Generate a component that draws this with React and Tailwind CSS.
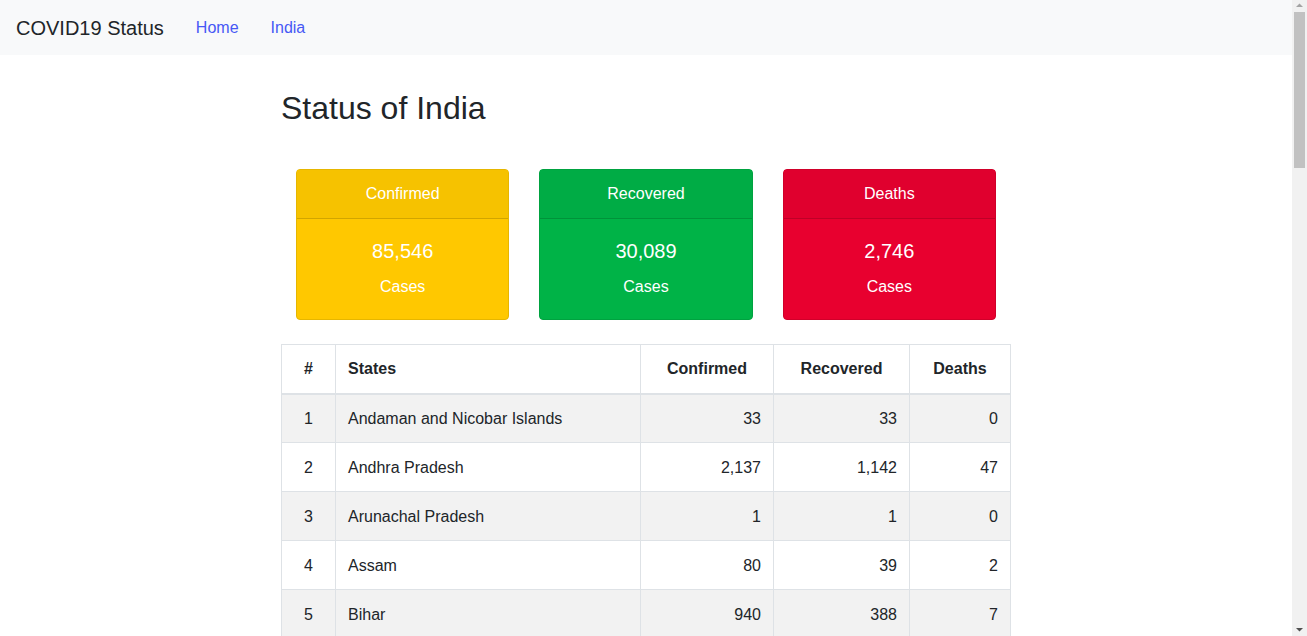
import React from 'react';

const font = { fontFamily: '"Liberation Sans", Arial, sans-serif' };

const states = [
  ['Andaman and Nicobar Islands', 33, 33, 0],
  ['Andhra Pradesh', 2137, 1142, 47],
  ['Arunachal Pradesh', 1, 1, 0],
  ['Assam', 80, 39, 2],
  ['Bihar', 940, 388, 7],
  ['Chandigarh', 191, 43, 3],
  ['Chhattisgarh', 66, 56, 0],
  ['Dadra and Nagar Haveli and Daman and Diu', 1, 0, 0],
  ['Delhi', 8470, 3045, 115],
  ['Goa', 14, 7, 0],
  ['Gujarat', 9931, 4035, 606],
  ['Haryana', 818, 500, 11],
  ['Himachal Pradesh', 74, 41, 3],
  ['Jammu and Kashmir', 983, 466, 11],
  ['Jharkhand', 203, 87, 3],
  ['Karnataka', 987, 460, 35],
  ['Kerala', 560, 490, 4],
  ['Ladakh', 43, 21, 0],
  ['Lakshadweep', 0, 0, 0],
  ['Madhya Pradesh', 4426, 2171, 237],
  ['Maharashtra', 29100, 6564, 1068],
  ['Manipur', 3, 2, 0],
  ['Meghalaya', 13, 11, 1],
  ['Mizoram', 1, 1, 0],
  ['Nagaland', 0, 0, 0],
  ['Odisha', 611, 143, 3],
  ['Puducherry', 13, 9, 1],
  ['Punjab', 1935, 201, 32],
  ['Rajasthan', 4727, 2677, 125],
  ['Sikkim', 0, 0, 0],
  ['Tamil Nadu', 10108, 2599, 71],
  ['Telangana', 1454, 959, 34],
  ['Tripura', 156, 2, 0],
  ['Uttarakhand', 82, 51, 1],
  ['Uttar Pradesh', 3902, 2072, 88],
  ['West Bengal', 2461, 829, 225],
];

const fmt = (n) => n.toLocaleString('en-US');

function StatCard({ title, count, body, head, border }) {
  return (
    <div className={`flex-1 rounded border text-white text-center ${body} ${border}`}>
      <div className={`h-[49px] flex items-center justify-center border-b border-black/15 ${head}`}>
        {title}
      </div>
      <div className="pt-[17px] pb-[21px]">
        <div className="text-[20px] leading-[30px]">{count}</div>
        <div className="mt-[9px] leading-[24px]">Cases</div>
      </div>
    </div>
  );
}

// classic browser scrollbar seen at the right edge of the reference
function Scrollbar() {
  return (
    <div className="w-[15px] h-full bg-[#f1f1f1] flex flex-col items-center shrink-0">
      <svg width="15" height="12" viewBox="0 0 15 12" className="shrink-0">
        <path d="M4 7h7L7.5 3.5z" fill="#a3a3a3" />
      </svg>
      <div className="w-[11px] h-[156px] bg-[#c1c1c1] shrink-0" />
      <div className="flex-1" />
      <svg width="15" height="12" viewBox="0 0 15 12" className="shrink-0">
        <path d="M4 4h7L7.5 7.5z" fill="#505050" />
      </svg>
    </div>
  );
}

export default function App() {
  return (
    <div className="h-screen flex bg-white text-[#212529] text-base overflow-hidden" style={font}>
      <div className="flex-1 min-w-0 h-full overflow-hidden">
        {/* navbar */}
        <nav className="h-[55px] bg-[#f8f9fa] flex items-center px-4">
          <span className="text-[20px] mr-4">COVID19 Status</span>
          <a href="#" className="px-4 text-[#4658f5]">Home</a>
          <a href="#" className="px-4 text-[#4658f5]">India</a>
        </nav>

        <main className="w-[730px] mx-auto pt-[34px] pb-[40px]">
          <h2 className="text-[32px] leading-[38px] font-normal">Status of India</h2>

          {/* summary cards */}
          <div className="flex gap-[30px] px-[15px] mt-[42px] h-[151px]">
            <StatCard title="Confirmed" count="85,546" body="bg-[#ffc800]" head="bg-[#f6c200]" border="border-[#e6b600]" />
            <StatCard title="Recovered" count="30,089" body="bg-[#00b347]" head="bg-[#00ac45]" border="border-[#00a240]" />
            <StatCard title="Deaths" count="2,746" body="bg-[#e8002f]" head="bg-[#e0002e]" border="border-[#d0002a]" />
          </div>

          {/* states table */}
          <table className="w-full mt-[24px] border-collapse border border-[#dee2e6]">
            <thead>
              <tr className="font-bold">
                <th className="w-[54px] h-[49px] border border-[#dee2e6] border-b-2 text-center">#</th>
                <th className="w-[305px] border border-[#dee2e6] border-b-2 text-left px-3">States</th>
                <th className="w-[133px] border border-[#dee2e6] border-b-2 text-center">Confirmed</th>
                <th className="w-[136px] border border-[#dee2e6] border-b-2 text-center">Recovered</th>
                <th className="border border-[#dee2e6] border-b-2 text-center">Deaths</th>
              </tr>
            </thead>
            <tbody>
              {states.map(([name, c, r, d], i) => (
                <tr key={name} className={i % 2 === 0 ? 'bg-[#f2f2f2]' : 'bg-white'}>
                  <td className="h-[49px] pt-px border border-[#dee2e6] text-center">{i + 1}</td>
                  <td className="pt-px border border-[#dee2e6] px-3">{name}</td>
                  <td className="pt-px border border-[#dee2e6] px-3 text-right">{fmt(c)}</td>
                  <td className="pt-px border border-[#dee2e6] px-3 text-right">{fmt(r)}</td>
                  <td className="pt-px border border-[#dee2e6] px-3 text-right">{fmt(d)}</td>
                </tr>
              ))}
            </tbody>
          </table>
        </main>
      </div>
      <Scrollbar />
    </div>
  );
}
